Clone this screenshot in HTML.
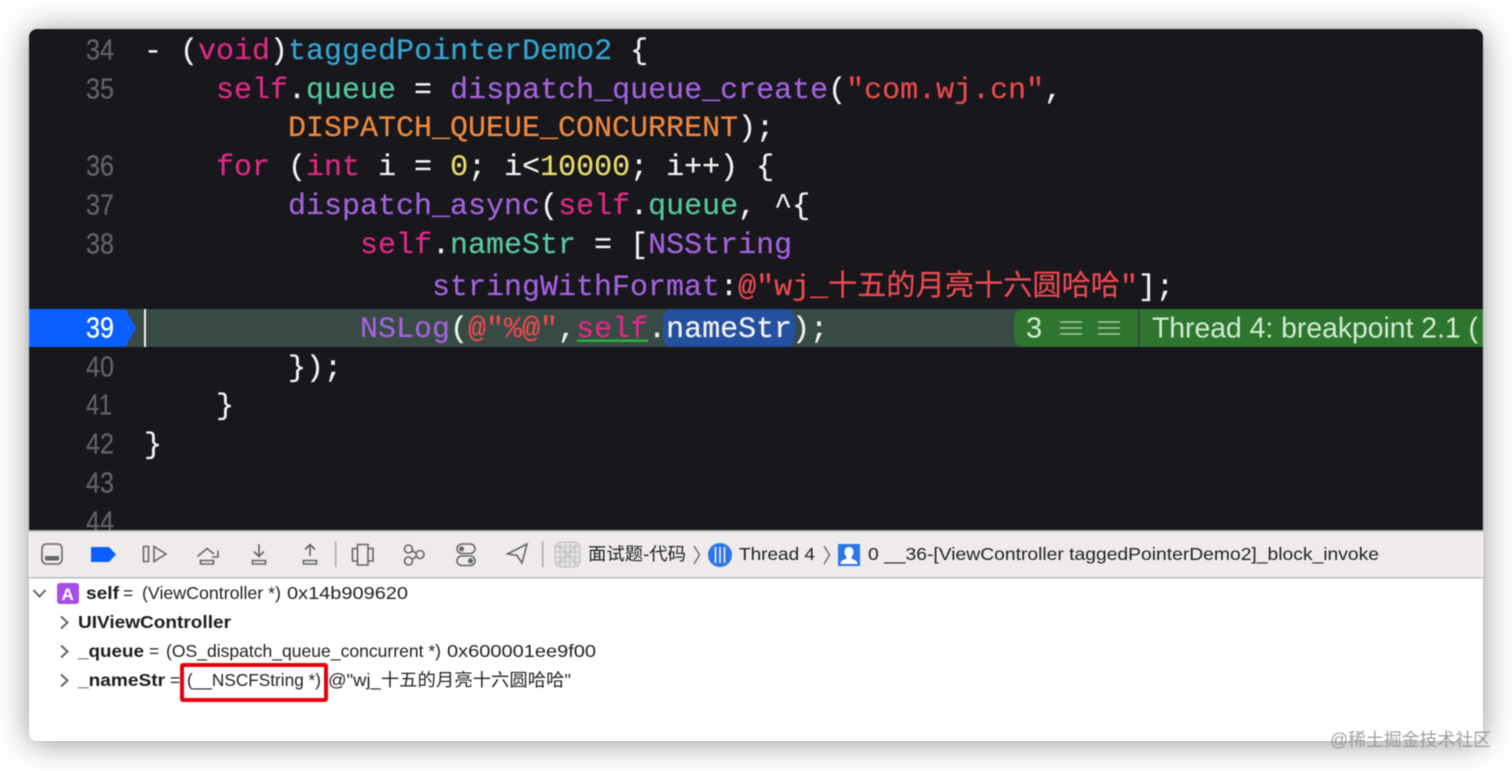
<!DOCTYPE html>
<html><head><meta charset="utf-8"><style>
html,body{margin:0;padding:0;background:#fff;width:1512px;height:771px;overflow:hidden}
#card{position:absolute;left:29px;top:29px;width:1454px;height:712px;border-radius:8px;box-shadow:0 2px 32px rgba(0,0,0,.42);background:#fff}
svg{position:absolute;left:0;top:0;filter:blur(.4px)}
.c{font-family:"Liberation Mono","Noto Sans CJK SC",monospace;font-size:30px;white-space:pre}
.c text{stroke:currentColor;stroke-width:.2px}
.n{font-family:"Liberation Sans",sans-serif;font-size:29px;fill:#626267;stroke:#626267;stroke-width:.25px}
.u{font-family:"Liberation Sans","Noto Sans CJK SC",sans-serif;font-size:17.5px;fill:#222}
.b{font-weight:bold;fill:#1c1c1c}
.i{fill:none;stroke:#666;stroke-width:1.6}
.k{color:#df2a85;fill:#df2a85}.t{color:#57c9a0;fill:#57c9a0}.p{color:#a463dd;fill:#a463dd}.o{color:#f0883c;fill:#f0883c}
.f{color:#35a6d0;fill:#35a6d0}.y{color:#e8dc6a;fill:#e8dc6a}.r{color:#ea4a50;fill:#ea4a50}.w{color:#f2f2f2;fill:#f2f2f2}
</style></head><body>
<div id="card"></div>
<svg width="1512" height="771" viewBox="0 0 1512 771" xmlns="http://www.w3.org/2000/svg">
<defs><clipPath id="cc"><path d="M29 531V37a8 8 0 0 1 8-8H1475a8 8 0 0 1 8 8V531Z"/></clipPath>
<clipPath id="lc"><path d="M29 578H1483V733a8 8 0 0 1-8 8H37a8 8 0 0 1-8-8Z"/></clipPath></defs>
<g clip-path="url(#cc)">
<rect x="29" y="29" width="1454" height="502" fill="#17171c"/>
<rect x="125" y="309" width="1358" height="38" fill="#384a44"/>
<path d="M29 309H125L136 328L125 347H29Z" fill="#0a60ff"/>
<rect x="144" y="309" width="2" height="38" fill="#f2f2f2"/>
<rect x="663" y="309" width="132" height="38" rx="9" fill="#24519f"/>
<rect x="577" y="339.500" width="71" height="2.500" fill="#2ab03a"/>
<path d="M1014 319a10 10 0 0 1 10-10H1138V347H1024a10 10 0 0 1-10-10Z" fill="#2e7530"/>
<rect x="1140" y="309" width="343" height="38" fill="#2e7530"/>
<g stroke="#b9d9b6" stroke-width="1.300"><path d="M1060 322H1082M1060 328H1082M1060 334H1082M1098 322H1120M1098 328H1120M1098 334H1120"/></g>
<text x="1026" y="337.500" font-family="Liberation Sans" font-size="29" fill="#d3ecd0">3</text>
<text x="1152" y="337.500" font-family="Liberation Sans" font-size="29" fill="#d3ecd0" textLength="326" lengthAdjust="spacingAndGlyphs">Thread 4: breakpoint 2.1 (</text>
<g class="n">
<text x="86" y="59.500" textLength="28" lengthAdjust="spacingAndGlyphs">34</text>
<text x="86" y="98.500" textLength="28" lengthAdjust="spacingAndGlyphs">35</text>
<text x="86" y="175.500" textLength="28" lengthAdjust="spacingAndGlyphs">36</text>
<text x="86" y="214.500" textLength="28" lengthAdjust="spacingAndGlyphs">37</text>
<text x="86" y="253.500" textLength="28" lengthAdjust="spacingAndGlyphs">38</text>
<text x="86" y="337.500" textLength="28" lengthAdjust="spacingAndGlyphs" style="fill:#fff;stroke:#fff">39</text>
<text x="86" y="376.500" textLength="28" lengthAdjust="spacingAndGlyphs">40</text>
<text x="86" y="414.500" textLength="26" lengthAdjust="spacingAndGlyphs">41</text>
<text x="86" y="453.500" textLength="28" lengthAdjust="spacingAndGlyphs">42</text>
<text x="86" y="492.500" textLength="28" lengthAdjust="spacingAndGlyphs">43</text>
<text x="86" y="531.500" textLength="28" lengthAdjust="spacingAndGlyphs">44</text>
</g>
<g class="c" xml:space="preserve">
<text x="144" y="59" class="w">- (<tspan class="k">void</tspan>)<tspan class="f">taggedPointerDemo2</tspan> {</text>
<text x="216" y="98" class="w"><tspan class="k">self</tspan>.<tspan class="t">queue</tspan> = <tspan class="p">dispatch_queue_create</tspan>(<tspan class="r">"com.wj.cn"</tspan>,</text>
<text x="288" y="136" class="o">DISPATCH_QUEUE_CONCURRENT<tspan class="w">);</tspan></text>
<text x="216" y="175" class="w"><tspan class="k">for</tspan> (<tspan class="k">int</tspan> i = <tspan class="y">0</tspan>; i&lt;<tspan class="y">10000</tspan>; i++) {</text>
<text x="288" y="214" class="w"><tspan class="p">dispatch_async</tspan>(<tspan class="k">self</tspan>.<tspan class="t">queue</tspan>, ^{</text>
<text x="360" y="253" class="w"><tspan class="k">self</tspan>.<tspan class="t">nameStr</tspan> = [<tspan class="p">NSString</tspan></text>
<text x="432" y="295" class="p">stringWithFormat<tspan class="w">:</tspan><tspan class="r">@"wj_</tspan></text>
<text x="828" y="295" class="r" style="font-size:29px" textLength="292" lengthAdjust="spacingAndGlyphs">十五的月亮十六圆哈哈</text>
<text x="1120" y="295" class="r">"<tspan class="w">];</tspan></text>
<text x="360" y="337" class="w"><tspan class="p">NSLog</tspan>(<tspan class="r">@"%@"</tspan>,<tspan class="k">self</tspan>.nameStr);</text>
<text x="288" y="376" class="w">});</text>
<text x="216" y="414" class="w">}</text>
<text x="144" y="453" class="w">}</text>
</g>
</g>
<rect x="29" y="531" width="1454" height="47" fill="#efebeb"/>
<rect x="29" y="530" width="1454" height="1.500" fill="#a8a8a8"/>
<rect x="29" y="577" width="1454" height="1.500" fill="#bdbdbd"/>
<!-- toolbar icons -->
<g class="i">
<rect x="42" y="544" width="20" height="20" rx="4.500"/>
<path d="M143.500 546.500h5v15h-5ZM154 546.500L166 554L154 561.500Z"/>
<path d="M197.500 556.500L207 548.500L214 554M218 550.500V557H212M200.500 560.500H213.500V564H200.500Z"/>
<path d="M259 544V556M254 551.500L259 556.500L264 551.500M252.500 560.500H265.500V564H252.500Z"/>
<path d="M310 556V544.500M305 549.500L310 544.500L315 549.500M303.500 560.500H316.500V564H303.500Z"/>
<path d="M357.500 544.500H368V565H357.500ZM357.500 548.500H352.500V561H357.500M368 548.500H373V561H368"/>
<circle cx="408.500" cy="549" r="4"/><circle cx="408.500" cy="561" r="4"/><circle cx="420" cy="554.500" r="4"/>
<path d="M412 551L416.500 553M412 559.500L416.500 556.500"/>
<rect x="457" y="544" width="18" height="9.500" rx="4.750"/><rect x="457" y="556" width="18" height="9.500" rx="4.750"/>
<path d="M507.500 554L527 544L522 563L517 555.500Z"/>
<path d="M694 546L699.500 555L694 564M824 546L829.500 555L824 564" stroke="#777"/>
</g>
<rect x="45" y="556" width="14" height="4.500" rx="1" fill="#666"/>
<path d="M91 547H109L116 554.500L109 562H91Z" fill="#0a60ff"/>
<circle cx="461.500" cy="548.800" r="2.600" fill="#666"/><circle cx="470.500" cy="560.800" r="2.600" fill="#666"/>
<rect x="335" y="541" width="1.500" height="26" fill="#a9a9a9"/>
<rect x="542" y="541" width="1.500" height="26" fill="#a9a9a9"/>
<!-- app icon -->
<rect x="555" y="542" width="25" height="25" rx="6" fill="#e6e3e3" stroke="#bcbcbc"/>
<path d="M560 542V567M565 542V567M570 542V567M575 542V567M555 547H580M555 552H580M555 557H580M555 562H580M557 544L578 565M578 544L557 565" stroke="#b8b8b8" stroke-width=".7" fill="none"/>
<!-- thread icon -->
<circle cx="720" cy="555" r="12" fill="#2c74e8"/>
<path d="M715.500 547V563M720 547V563M724.500 547V563" stroke="#fff" stroke-width="1.400"/>
<!-- person icon -->
<rect x="838" y="544" width="22" height="22" fill="#2a78e6"/>
<path d="M849 547c3 0 4.500 2.300 4.500 5 0 2-1 4-2 5v1.500c1.500 1 5 1.500 6 4.500v1h-17v-1c1-3 4.500-3.500 6-4.500V557c-1-1-2-3-2-5 0-2.700 1.500-5 4.500-5Z" fill="#fff"/>
<g class="u">
<text x="588" y="560" textLength="98" lengthAdjust="spacingAndGlyphs">面试题-代码</text>
<text x="739" y="560" textLength="76" lengthAdjust="spacingAndGlyphs">Thread 4</text>
<text x="868" y="560" textLength="511" lengthAdjust="spacingAndGlyphs">0 __36-[ViewController taggedPointerDemo2]_block_invoke</text>
</g>
<!-- variables view -->
<g fill="none" stroke="#666" stroke-width="2">
<path d="M33.500 590L39.500 596.500L45.500 590M61 616.500L67.500 622.500L61 628.500M61 645.500L67.500 651.500L61 657.500M61 674.500L67.500 680.500L61 686.500"/>
</g>
<rect x="57" y="583" width="22" height="21" rx="3" fill="#a64ee6"/>
<text x="61.500" y="600" font-family="Liberation Sans" font-size="17" font-weight="bold" fill="#fff">A</text>
<g class="u">
<text x="86" y="599" class="b" textLength="33" lengthAdjust="spacingAndGlyphs">self</text>
<text x="123" y="599">=</text>
<text x="142" y="599" textLength="139" lengthAdjust="spacingAndGlyphs">(ViewController *)</text>
<text x="287" y="599" textLength="121" lengthAdjust="spacingAndGlyphs">0x14b909620</text>
<text x="78" y="628" class="b" textLength="153" lengthAdjust="spacingAndGlyphs">UIViewController</text>
<text x="78" y="657" class="b" textLength="66" lengthAdjust="spacingAndGlyphs">_queue</text>
<text x="149" y="657">=</text>
<text x="166" y="657" textLength="275" lengthAdjust="spacingAndGlyphs">(OS_dispatch_queue_concurrent *)</text>
<text x="447" y="657" textLength="149" lengthAdjust="spacingAndGlyphs">0x600001ee9f00</text>
<text x="78" y="686" class="b" textLength="87" lengthAdjust="spacingAndGlyphs">_nameStr</text>
<text x="170" y="686">=</text>
<text x="187" y="686" textLength="134" lengthAdjust="spacingAndGlyphs">(__NSCFString *)</text>
<text x="328" y="686" textLength="243" lengthAdjust="spacingAndGlyphs">@"wj_十五的月亮十六圆哈哈"</text>
</g>
<rect x="182" y="665" width="144" height="35" rx="1" fill="none" stroke="#e6000f" stroke-width="4"/>
<text x="1330" y="746" font-family="Liberation Sans,Noto Sans CJK SC,sans-serif" font-size="18" fill="#8a8a8a" fill-opacity=".8" textLength="161" lengthAdjust="spacingAndGlyphs">@稀土掘金技术社区</text>
</svg>
</body></html>
